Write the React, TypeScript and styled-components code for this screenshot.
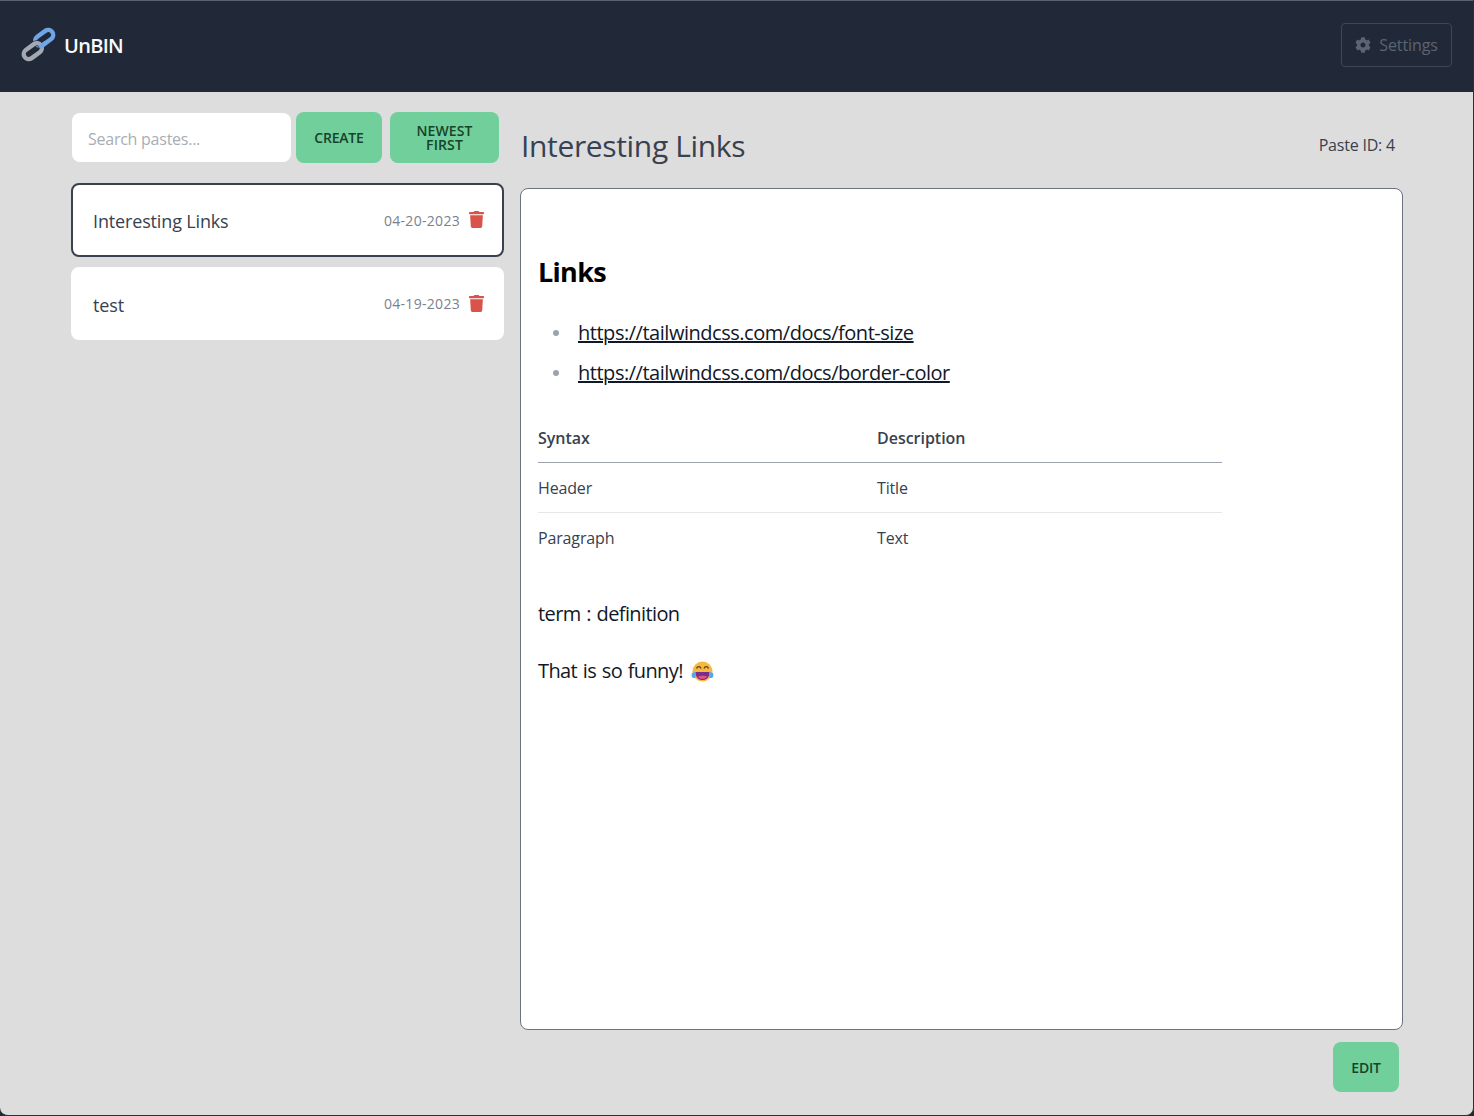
import styled, { createGlobalStyle } from "styled-components";
import { FaCog, FaTrash } from "react-icons/fa";

const Global = createGlobalStyle`
  html, body {
    margin: 0;
    padding: 0;
    background: #1f2937;
  }
  body {
    font-family: "Open Sans", "Noto Sans", "Liberation Sans", sans-serif;
  }
`;

const Page = styled.div`
  width: 1474px;
  height: 1116px;
  background: #dddddd;
  border-radius: 0 0 8px 8px;
  overflow: hidden;
  box-sizing: border-box;
  border-right: 1px solid #2b2f36;
  border-bottom: 1px solid #2b2f36;
`;

const Nav = styled.nav`
  height: 92px;
  box-sizing: border-box;
  background: #212938;
  border-top: 1px solid #5a6270;
  display: flex;
  align-items: center;
  justify-content: space-between;
  padding: 0 21px 0 18px;
`;

const Brand = styled.div`
  display: flex;
  align-items: center;
  gap: 4px;
  margin-top: -3px;
  color: #f9fafb;
  font-size: 20px;
  font-weight: 600;
  letter-spacing: -0.7px;
`;

const SettingsButton = styled.button`
  width: 111px;
  height: 44px;
  margin-top: -3px;
  box-sizing: border-box;
  display: flex;
  align-items: center;
  justify-content: center;
  gap: 8px;
  background: transparent;
  border: 1px solid #3f4756;
  border-radius: 4px;
  color: #5b6472;
  font: inherit;
  font-size: 16px;
  letter-spacing: -0.1px;
`;

const Main = styled.main`
  display: flex;
  gap: 16px;
  padding: 20px 0 0 71px;
`;

const Sidebar = styled.aside`
  width: 433px;
  display: flex;
  flex-direction: column;
  gap: 20px;
`;

const Toolbar = styled.div`
  display: flex;
  align-items: center;
  gap: 8px;
  height: 51px;
`;

const SearchInput = styled.input`
  width: 219px;
  height: 49px;
  margin-left: 1px;
  margin-right: -3px;
  box-sizing: border-box;
  border: none;
  outline: none;
  border-radius: 8px;
  background: #fff;
  padding: 2px 16px 0;
  font: inherit;
  font-size: 16px;
  letter-spacing: -0.25px;
  color: #1f2937;
  &::placeholder {
    color: #a9adb4;
    opacity: 1;
  }
`;

const ActionButton = styled.button<{ $width: number }>`
  width: ${(p) => p.$width}px;
  height: 51px;
  box-sizing: border-box;
  padding: 0;
  border: none;
  border-radius: 8px;
  background: #70cf9b;
  color: #17432a;
  font: inherit;
  font-size: 14px;
  line-height: 15px;
  font-weight: 600;
  letter-spacing: -0.2px;
  text-transform: uppercase;
`;

const SortButton = styled(ActionButton)`
  padding: 0 20px;
  line-height: 14px;
  letter-spacing: 0.1px;
`;

const EditButton = styled(ActionButton)`
  height: 50px;
`;

const PasteList = styled.div`
  display: flex;
  flex-direction: column;
  gap: 10px;
`;

const PasteCard = styled.div<{ $active?: boolean }>`
  height: ${(p) => (p.$active ? 74 : 73)}px;
  box-sizing: border-box;
  background: #fff;
  border-radius: 8px;
  border: 2px solid ${(p) => (p.$active ? "#374151" : "#fff")};
  display: flex;
  align-items: center;
  justify-content: space-between;
  padding: 0 17px 0 20px;
  color: #374151;
`;

const PasteTitle = styled.span`
  font-size: 18px;
  letter-spacing: -0.15px;
  margin-top: 2px;
`;

const PasteMeta = styled.div`
  display: flex;
  align-items: center;
  gap: 8px;
  color: #7b818c;
  font-size: 14px;
  letter-spacing: 0.3px;
  svg {
    color: #d9534a;
    margin-top: -1px;
  }
`;

const Content = styled.section`
  width: 883px;
`;

const ContentHeader = styled.header`
  height: 66px;
  margin-bottom: 10px;
  display: flex;
  align-items: center;
  justify-content: space-between;
  padding: 0 8px 0 1px;
  color: #374151;
`;

const PageTitle = styled.h1`
  margin: 0;
  font-size: 30px;
  font-weight: 400;
  letter-spacing: -0.35px;
  color: #374151;
`;

const PasteId = styled.span`
  font-size: 16px;
  letter-spacing: -0.2px;
`;

const Viewer = styled.article`
  height: 842px;
  box-sizing: border-box;
  background: #fff;
  border: 1px solid #6b7280;
  border-radius: 8px;
  padding: 64px 17px 0;
  color: #111827;
`;

const SectionHeading = styled.h2`
  margin: 0 0 22px;
  font-size: 27px;
  line-height: 38px;
  font-weight: 700;
  letter-spacing: -0.7px;
  color: #000;
`;

const LinkList = styled.ul`
  margin: 0;
  padding: 0 0 0 15px;
  list-style: none;
  font-size: 20px;
  line-height: 40px;
  letter-spacing: -0.47px;
`;

const LinkItem = styled.li`
  display: flex;
  align-items: center;
  gap: 19px;
  &::before {
    content: "";
    width: 6px;
    height: 6px;
    border-radius: 50%;
    background: #9ca3af;
  }
`;

const TextLink = styled.a`
  color: #111827;
  text-decoration: underline;
`;

const Table = styled.table`
  width: 684px;
  margin-top: 20px;
  border-collapse: collapse;
  table-layout: fixed;
  font-size: 16px;
  letter-spacing: -0.15px;
  color: #374151;
  th {
    text-align: left;
    font-weight: 600;
    letter-spacing: -0.02px;
    height: 49px;
    border-bottom: 1px solid #9ca3af;
    padding: 0;
  }
  td {
    height: 49px;
    padding: 0;
    border-bottom: 1px solid #e5e7eb;
  }
  tr:last-child td {
    border-bottom: none;
  }
`;

const Paragraph = styled.p`
  margin: 0;
  font-size: 20px;
  line-height: 28px;
  letter-spacing: -0.6px;
  word-spacing: 1px;
  display: flex;
  align-items: center;
`;

const Term = styled(Paragraph)`
  margin-top: 38px;
  margin-bottom: 29px;
`;

const Footer = styled.div`
  display: flex;
  justify-content: flex-end;
  padding: 12px 4px 0 0;
`;

const EmojiIcon = styled.svg`
  margin-left: 8px;
`;

function LinkLogo() {
  return (
    <svg width="42" height="42" viewBox="0 0 42 42" fill="none">
      <g transform="translate(20.5 20.5) rotate(-36)">
        <rect x="-1.5" y="-7" width="20" height="10" rx="5" stroke="#6ea6e6" strokeWidth="4.4" />
        <rect x="-18.5" y="-3" width="20" height="10" rx="5" stroke="#212938" strokeWidth="6" />
        <rect x="-18.5" y="-3" width="20" height="10" rx="5" stroke="#a4a9b1" strokeWidth="4.4" />
        <path d="M-1 3 H7" stroke="#6ea6e6" strokeWidth="4.4" />
      </g>
    </svg>
  );
}

function LaughEmoji() {
  return (
    <EmojiIcon width="23" height="23" viewBox="0 0 23 23">
      <circle cx="11.5" cy="11.5" r="10" fill="#f6b93f" />
      <path d="M4.5 12 H18.5 C18.5 17.5 15.5 20 11.5 20 C7.5 20 4.5 17.5 4.5 12 Z" fill="#7b2d8e" />
      <path d="M7 16.8 C9 15.4 14 15.4 16 16.8 C14.5 19.6 8.5 19.6 7 16.8 Z" fill="#e0567a" />
      <path d="M5.5 8.5 C6.5 6 9 6 10 8.5 M13 8.5 C14 6 16.5 6 17.5 8.5" stroke="#5b3a1a" strokeWidth="1.3" fill="none" />
      <path d="M1 13 C0 16 1 18 3 18 C5 18 5.5 15.5 4 12 Z M22 13 C23 16 22 18 20 18 C18 18 17.5 15.5 19 12 Z" fill="#5aa6e6" />
    </EmojiIcon>
  );
}

export default function App() {
  return (
    <>
      <Global />
      <Page>
        <Nav>
          <Brand>
            <LinkLogo />
            UnBIN
          </Brand>
          <SettingsButton>
            <FaCog size={16} />
            Settings
          </SettingsButton>
        </Nav>
        <Main>
          <Sidebar>
            <Toolbar>
              <SearchInput placeholder="Search pastes..." />
              <ActionButton $width={86}>Create</ActionButton>
              <SortButton $width={109}>Newest first</SortButton>
            </Toolbar>
            <PasteList>
              <PasteCard $active>
                <PasteTitle>Interesting Links</PasteTitle>
                <PasteMeta>
                  04-20-2023
                  <FaTrash size={17} />
                </PasteMeta>
              </PasteCard>
              <PasteCard>
                <PasteTitle>test</PasteTitle>
                <PasteMeta>
                  04-19-2023
                  <FaTrash size={17} />
                </PasteMeta>
              </PasteCard>
            </PasteList>
          </Sidebar>
          <Content>
            <ContentHeader>
              <PageTitle>Interesting Links</PageTitle>
              <PasteId>Paste ID: 4</PasteId>
            </ContentHeader>
            <Viewer>
              <SectionHeading>Links</SectionHeading>
              <LinkList>
                <LinkItem>
                  <TextLink href="#">https://tailwindcss.com/docs/font-size</TextLink>
                </LinkItem>
                <LinkItem>
                  <TextLink href="#">https://tailwindcss.com/docs/border-color</TextLink>
                </LinkItem>
              </LinkList>
              <Table>
                <colgroup>
                  <col width={339} />
                  <col />
                </colgroup>
                <thead>
                  <tr>
                    <th>Syntax</th>
                    <th>Description</th>
                  </tr>
                </thead>
                <tbody>
                  <tr>
                    <td>Header</td>
                    <td>Title</td>
                  </tr>
                  <tr>
                    <td>Paragraph</td>
                    <td>Text</td>
                  </tr>
                </tbody>
              </Table>
              <Term>term : definition</Term>
              <Paragraph>
                That is so funny!
                <LaughEmoji />
              </Paragraph>
            </Viewer>
            <Footer>
              <EditButton $width={66}>Edit</EditButton>
            </Footer>
          </Content>
        </Main>
      </Page>
    </>
  );
}
